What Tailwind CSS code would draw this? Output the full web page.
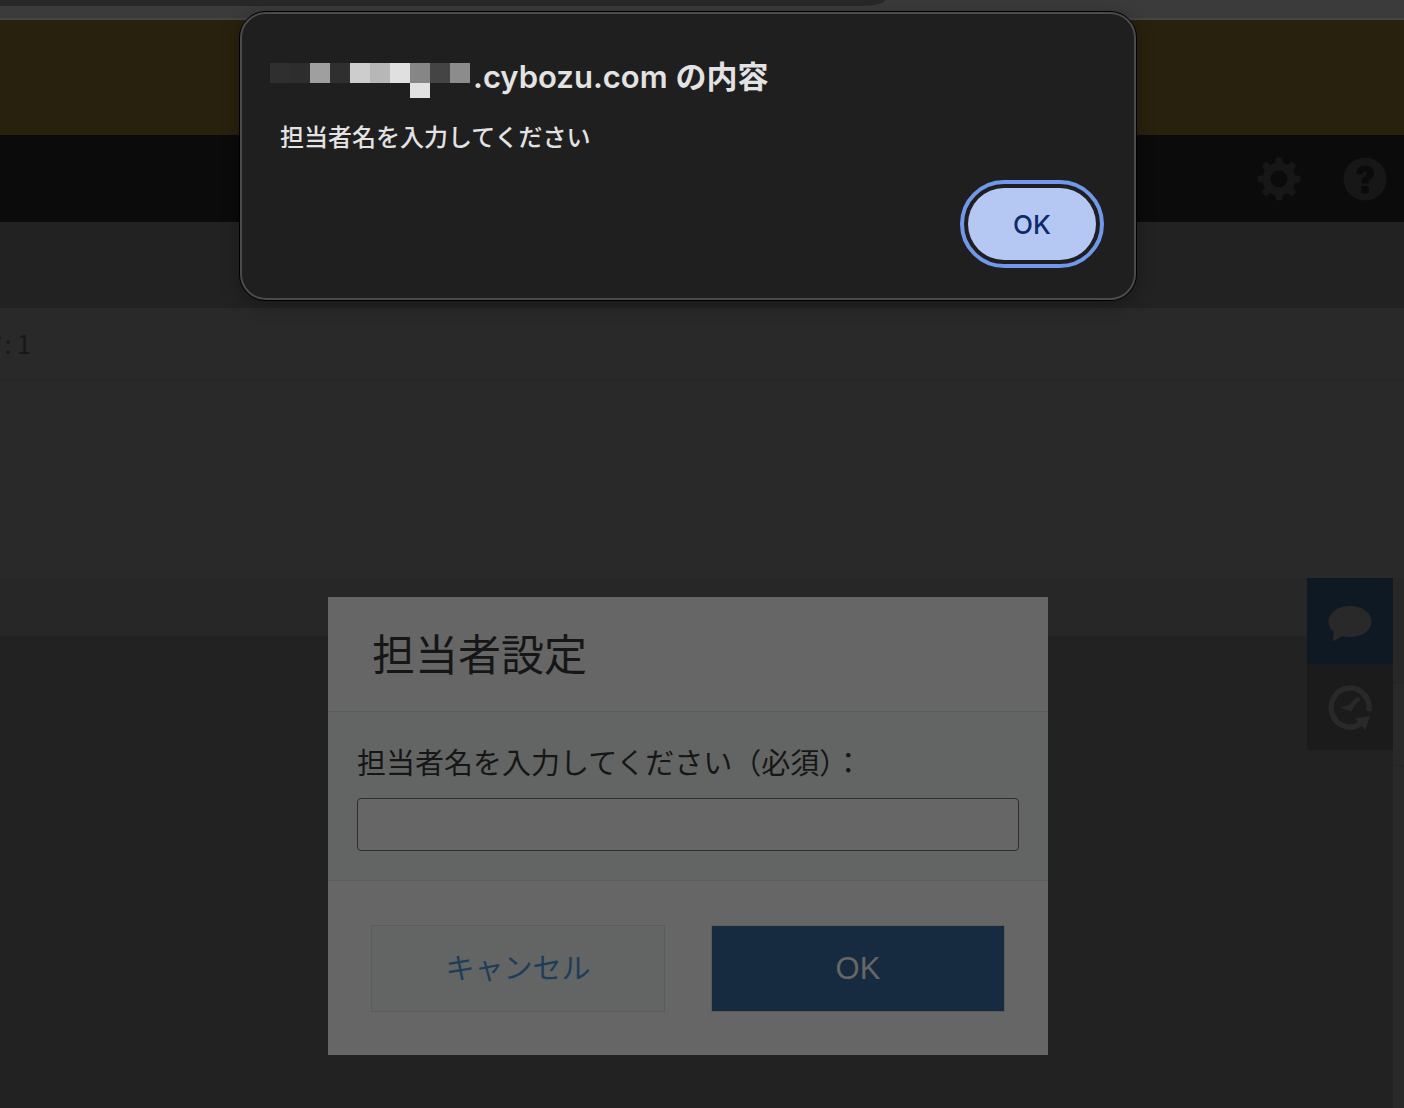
<!DOCTYPE html>
<html lang="ja">
<head>
    <meta charset="UTF-8">
    <title>担当者設定</title>
    <meta name="viewport" content="width=device-width, initial-scale=1.0">
    <script src="https://cdn.jsdelivr.net/npm/@tailwindcss/browser@4"></script>
</head>
<body class="relative flex min-h-screen flex-col overflow-x-hidden bg-[#222222] font-['Liberation_Sans','Noto_Sans_CJK_JP',sans-serif] text-[#161616]">

<!-- Browser toolbar -->
<div class="h-5 border-b-2 border-[#454545] bg-[#3b3b3b]">
    <div class="h-1.5 w-[63%] rounded-br-[24px_6px] bg-[#282828]"></div>
</div>

<!-- Notice band -->
<div class="h-[115px] bg-[#28210d]"></div>

<!-- Header -->
<header class="flex h-[87px] items-center justify-end gap-[42px] bg-[#0b0b0b] pr-[17px]">
    <button type="button" aria-label="設定">
        <svg class="size-11" viewBox="0 0 44 44" fill="#171717">
            <defs>
                <path id="tooth" d="M17 8 Q18.500 6 18.500 3 Q18.500 .5 20.500 .5 H23.500 Q25.500 .5 25.500 3 Q25.500 6 27 8 V12 H17 Z"/>
            </defs>
            <use href="#tooth"/>
            <use href="#tooth" transform="rotate(45 22 22)"/>
            <use href="#tooth" transform="rotate(90 22 22)"/>
            <use href="#tooth" transform="rotate(135 22 22)"/>
            <use href="#tooth" transform="rotate(180 22 22)"/>
            <use href="#tooth" transform="rotate(225 22 22)"/>
            <use href="#tooth" transform="rotate(270 22 22)"/>
            <use href="#tooth" transform="rotate(315 22 22)"/>
            <circle cx="22" cy="22" r="16.500"/>
            <circle cx="22" cy="22" r="8.500" fill="#0b0b0b"/>
        </svg>
    </button>
    <button type="button" aria-label="ヘルプ">
        <svg class="size-11" viewBox="0 0 44 44">
            <circle cx="22" cy="22" r="21.500" fill="#171717"/>
            <path d="M13 16.500 C13.500 11.500 17 8.500 22.300 8.500 C27.500 8.500 31 11.500 31 16 C31 21.500 25.500 21.500 25.500 25 V26.500 H18.800 V24.500 C18.800 19.500 23.800 19 23.800 16.500 C23.800 15 23 14.500 22 14.500 C20.500 14.500 19.800 15.500 19.500 17.500 Z" fill="#0b0b0b"/>
            <rect x="18.300" y="29" width="7.500" height="7.500" rx="1" fill="#0b0b0b"/>
        </svg>
    </button>
</header>

<div class="h-[86px] bg-[#222222]"></div>

<!-- Record fields -->
<div class="flex h-[73px] items-center border-b border-[#262626] bg-[#292929]">
    <div class="flex w-[31px] justify-end overflow-hidden font-['Noto_Sans_CJK_JP',sans-serif] text-[25px] whitespace-nowrap text-[#181818]">ド: 1</div>
</div>
<div class="h-[197px] bg-[#292929]"></div>

<!-- Record body -->
<main class="flex flex-1">
    <div class="flex-1">
        <div class="h-[58px] bg-[#272727]"></div>
    </div>
    <nav class="w-[86px]">
        <button type="button" aria-label="コメント" class="flex h-[86px] w-full items-center justify-center bg-[#0f1923]">
            <svg class="size-11" viewBox="0 0 44 44" fill="#292929">
                <path d="M22 7 C34 7 43.500 13.500 43.500 22.500 C43.500 31.500 34 38 22 38 C19 38 16.500 37.700 14 37 C11 39.500 8 41 4.500 42 C5.500 39 6 36 5.500 32.500 C2.300 30 .5 26.500 .5 22.500 C.5 13.500 10 7 22 7 Z"/>
            </svg>
        </button>
        <button type="button" aria-label="変更履歴" class="flex h-[86px] w-full items-center justify-center bg-[#1b1b1b]">
            <svg class="size-12" viewBox="0 0 48 48" fill="none" stroke="#292929">
                <path d="M42.800 28 A19 19.500 0 1 0 35 40.500" stroke-width="5.500"/>
                <path d="M32 16 L24 24" stroke-width="4" stroke-linecap="round"/>
                <path d="M14.500 24.500 L24 21.500 L28 24 L25 28.500 Z" fill="#292929" stroke="none"/>
                <path d="M29 35.500 L44 33 L39.500 47 Z" fill="#292929" stroke="none"/>
            </svg>
        </button>
    </nav>
    <div class="w-[11px] bg-[#292929]">
        <div class="h-[106px] border-b border-[#252525] bg-[#272727]"></div>
        <div class="h-[82px] border-b border-[#252525]"></div>
    </div>
</main>

<!-- Assignee dialog -->
<div class="absolute inset-x-0 top-[597px] flex justify-center pr-7">
    <form class="w-[720px] bg-[#666666]">
        <h2 class="flex h-[115px] items-center border-b border-[#5b5b5b] px-11 pt-1 text-[43px]">担当者設定</h2>
        <div class="border-b border-[#5b5f5f] bg-[#626564] px-[29px] pt-[30px] pb-[29px]">
            <label for="assignee" class="block text-[29px] leading-[44px]">担当者名を入力してください（必須）：</label>
            <input id="assignee" type="text" class="mt-3 block h-[53px] w-full rounded-[4px] border border-[#2d2f2f] bg-[#666666] px-3 text-[29px] outline-none">
        </div>
        <div class="flex gap-[46px] px-[43px] pt-11 pb-[43px]">
            <button type="button" class="h-[87px] flex-1 border border-[#5a5c5c] bg-[#626564] pt-0.5 text-[29px] text-[#1f3c59]">キャンセル</button>
            <button type="submit" class="h-[87px] flex-1 border border-[#5a5c5c] bg-[#162b40] pt-0.5 text-[31px] text-[#666666]">OK</button>
        </div>
    </form>
</div>

<!-- Browser alert -->
<div class="absolute inset-x-0 top-3 flex justify-center pr-7">
    <div role="alertdialog" aria-labelledby="alertTitle" class="w-[896px] rounded-[26px] border-2 border-[#4b4b4b] bg-[#1f1f1f] pt-[38px] pr-[38px] pb-[38px] pl-7 font-['Inter','Noto_Sans_CJK_JP',sans-serif] text-[#e3e3e3] shadow-[0_0_0_1px_#000000,0_4px_20px_rgba(0,0,0,0.3)]">
        <div class="flex items-start">
            <svg class="mt-[11px] h-9 w-[200px]" viewBox="0 0 200 36" shape-rendering="crispEdges">
                <rect x="0" width="20" height="20" fill="#2f2f2f"/>
                <rect x="20" width="20" height="20" fill="#2d2d2d"/>
                <rect x="40" width="20" height="20" fill="#9f9f9f"/>
                <rect x="60" width="20" height="20" fill="#2f2f2f"/>
                <rect x="80" width="20" height="20" fill="#cdcdcd"/>
                <rect x="100" width="20" height="20" fill="#b7b7b7"/>
                <rect x="120" width="20" height="20" fill="#e0e0e0"/>
                <rect x="140" width="20" height="20" fill="#868686"/>
                <rect x="160" width="20" height="20" fill="#444444"/>
                <rect x="180" width="20" height="20" fill="#8c8c8c"/>
                <rect x="140" y="20" width="20" height="15" fill="#e2e2e2"/>
            </svg>
            <h1 id="alertTitle" class="ml-[3px] text-[31px] leading-[50px] font-semibold">.cybozu.com の内容</h1>
        </div>
        <p class="mt-[18px] pl-2.5 text-2xl leading-9 font-medium">担当者名を入力してください</p>
        <div class="mt-8 flex justify-end">
            <button type="button" class="h-[72px] w-32 rounded-full bg-[#b5c8f3] text-[26px] font-medium text-[#0f2a6b] outline-4 outline-offset-4 outline-[#7099ee]">OK</button>
        </div>
    </div>
</div>

</body>
</html>
